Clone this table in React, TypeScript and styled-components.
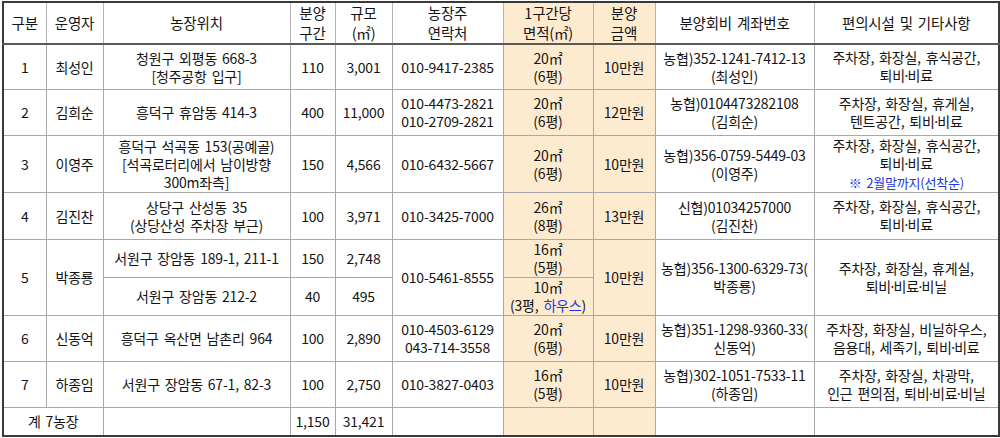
import styled, { createGlobalStyle } from "styled-components";
import { Fragment, ReactNode } from "react";

const GlobalStyle = createGlobalStyle`
  html, body {
    margin: 0;
    background: #ffffff;
  }
  body {
    font-family: "Noto Sans CJK KR", "Noto Sans", sans-serif;
    color: #141414;
  }
`;

const Page = styled.div`
  padding: 1px 0 0 2px;
`;

const Table = styled.table`
  width: 996px;
  table-layout: fixed;
  border-collapse: collapse;
  border: 2px solid #3a3a3a;
  font-size: 14px;
  letter-spacing: -0.2px;
  word-spacing: 2px;
`;

const Row = styled.tr<{ $h: number }>`
  height: ${(p) => p.$h}px;
`;

const Th = styled.th<{ $tint?: boolean }>`
  font-weight: 400;
  font-size: 14.5px;
  line-height: 20px;
  padding: 0;
  border: 1px solid #b4b4b4;
  border-bottom: 2px solid #5a5a5a;
  background: ${(p) => (p.$tint ? "#fdebcf" : "#ffffff")};
  text-align: center;
  vertical-align: middle;
`;

const Td = styled.td<{ $tint?: boolean }>`
  padding: 0;
  line-height: 18px;
  border: 1px solid #a8a8a8;
  background: ${(p) => (p.$tint ? "#fdebcf" : "#ffffff")};
  text-align: center;
  vertical-align: middle;
  white-space: nowrap;
`;

const Note = styled.span`
  display: block;
  margin-top: 1px;
  color: #2236e0;
  font-size: 13px;
`;

const Blue = styled.span`
  color: #2236e0;
`;

const Dot = styled.span`
  font-family: "Noto Sans", sans-serif;
  margin: 0 -0.5px;
`;

const widths = [43, 57, 187, 45, 57, 111, 90, 62, 159, 185];

// "퇴비·비료" → middle dots drawn with the narrow Latin glyph
function Dots({ text }: { text: string }) {
  const parts = text.split("·");
  return (
    <>
      {parts.map((p, i) => (
        <Fragment key={i}>
          {i > 0 && <Dot>·</Dot>}
          {p}
        </Fragment>
      ))}
    </>
  );
}

function Lines({ items }: { items: ReactNode[] }) {
  return (
    <>
      {items.map((t, i) => (
        <Fragment key={i}>
          {i > 0 && <br />}
          {typeof t === "string" ? <Dots text={t} /> : t}
        </Fragment>
      ))}
    </>
  );
}

interface Farm {
  no: string;
  owner: string;
  place: string[];
  lots: string;
  size: string;
  phone: string[];
  area: string[];
  price: string;
  account: string[];
  extra: ReactNode[];
  h: number;
}

const farms: Farm[] = [
  {
    no: "1",
    owner: "최성인",
    place: ["청원구 외평동 668-3", "[청주공항 입구]"],
    lots: "110",
    size: "3,001",
    phone: ["010-9417-2385"],
    area: ["20㎡", "(6평)"],
    price: "10만원",
    account: ["농협)352-1241-7412-13", "(최성인)"],
    extra: ["주차장, 화장실, 휴식공간,", "퇴비·비료"],
    h: 45,
  },
  {
    no: "2",
    owner: "김희순",
    place: ["흥덕구 휴암동 414-3"],
    lots: "400",
    size: "11,000",
    phone: ["010-4473-2821", "010-2709-2821"],
    area: ["20㎡", "(6평)"],
    price: "12만원",
    account: ["농협)0104473282108", "(김희순)"],
    extra: ["주차장, 화장실, 휴게실,", "텐트공간, 퇴비·비료"],
    h: 46,
  },
  {
    no: "3",
    owner: "이영주",
    place: ["흥덕구 석곡동 153(공예골)", "[석곡로터리에서 남이방향", "300m좌측]"],
    lots: "150",
    size: "4,566",
    phone: ["010-6432-5667"],
    area: ["20㎡", "(6평)"],
    price: "10만원",
    account: ["농협)356-0759-5449-03", "(이영주)"],
    extra: [
      "주차장, 화장실, 휴식공간,",
      <>
        <Dots text="퇴비·비료" />
        <Note>※ 2월말까지(선착순)</Note>
      </>,
    ],
    h: 55,
  },
  {
    no: "4",
    owner: "김진찬",
    place: ["상당구 산성동 35", "(상당산성 주차장 부근)"],
    lots: "100",
    size: "3,971",
    phone: ["010-3425-7000"],
    area: ["26㎡", "(8평)"],
    price: "13만원",
    account: ["신협)01034257000", "(김진찬)"],
    extra: ["주차장, 화장실, 휴식공간,", "퇴비·비료"],
    h: 47,
  },
  {
    no: "6",
    owner: "신동억",
    place: ["흥덕구 옥산면 남촌리 964"],
    lots: "100",
    size: "2,890",
    phone: ["010-4503-6129", "043-714-3558"],
    area: ["20㎡", "(6평)"],
    price: "10만원",
    account: ["농협)351-1298-9360-33(", "신동억)"],
    extra: ["주차장, 화장실, 비닐하우스,", "음용대, 세족기, 퇴비·비료"],
    h: 46,
  },
  {
    no: "7",
    owner: "하종임",
    place: ["서원구 장암동 67-1, 82-3"],
    lots: "100",
    size: "2,750",
    phone: ["010-3827-0403"],
    area: ["16㎡", "(5평)"],
    price: "10만원",
    account: ["농협)302-1051-7533-11", "(하종임)"],
    extra: ["주차장, 화장실, 차광막,", "인근 편의점, 퇴비·비료·비닐"],
    h: 46,
  },
];

function FarmRow({ f }: { f: Farm }) {
  return (
    <Row $h={f.h}>
      <Td>{f.no}</Td>
      <Td>{f.owner}</Td>
      <Td>
        <Lines items={f.place} />
      </Td>
      <Td>{f.lots}</Td>
      <Td>{f.size}</Td>
      <Td>
        <Lines items={f.phone} />
      </Td>
      <Td $tint>
        <Lines items={f.area} />
      </Td>
      <Td $tint>{f.price}</Td>
      <Td>
        <Lines items={f.account} />
      </Td>
      <Td>
        <Lines items={f.extra} />
      </Td>
    </Row>
  );
}

export default function App() {
  return (
    <Page>
      <GlobalStyle />
      <Table>
        <colgroup>
          {widths.map((w, i) => (
            <col key={i} style={{ width: w }} />
          ))}
        </colgroup>
        <thead>
          <Row $h={42}>
            <Th>구분</Th>
            <Th>운영자</Th>
            <Th>농장위치</Th>
            <Th>
              분양
              <br />
              구간
            </Th>
            <Th>
              규모
              <br />
              (㎡)
            </Th>
            <Th>
              농장주
              <br />
              연락처
            </Th>
            <Th $tint>
              1구간당
              <br />
              면적(㎡)
            </Th>
            <Th $tint>
              분양
              <br />
              금액
            </Th>
            <Th>분양회비 계좌번호</Th>
            <Th>편의시설 및 기타사항</Th>
          </Row>
        </thead>
        <tbody>
          {farms.slice(0, 4).map((f) => (
            <FarmRow key={f.no} f={f} />
          ))}
          <Row $h={38}>
            <Td rowSpan={2}>5</Td>
            <Td rowSpan={2}>박종룡</Td>
            <Td>서원구 장암동 189-1, 211-1</Td>
            <Td>150</Td>
            <Td>2,748</Td>
            <Td rowSpan={2}>010-5461-8555</Td>
            <Td $tint>
              16㎡
              <br />
              (5평)
            </Td>
            <Td $tint rowSpan={2}>
              10만원
            </Td>
            <Td rowSpan={2}>
              농협)356-1300-6329-73(
              <br />
              박종룡)
            </Td>
            <Td rowSpan={2}>
              <Lines items={["주차장, 화장실, 휴게실,", "퇴비·비료·비닐"]} />
            </Td>
          </Row>
          <Row $h={38}>
            <Td>서원구 장암동 212-2</Td>
            <Td>40</Td>
            <Td>495</Td>
            <Td $tint>
              10㎡
              <br />
              (3평, <Blue>하우스</Blue>)
            </Td>
          </Row>
          {farms.slice(4).map((f) => (
            <FarmRow key={f.no} f={f} />
          ))}
          <Row $h={29}>
            <Td colSpan={2}>계 7농장</Td>
            <Td />
            <Td>1,150</Td>
            <Td>31,421</Td>
            <Td />
            <Td $tint />
            <Td $tint />
            <Td />
            <Td />
          </Row>
        </tbody>
      </Table>
    </Page>
  );
}
